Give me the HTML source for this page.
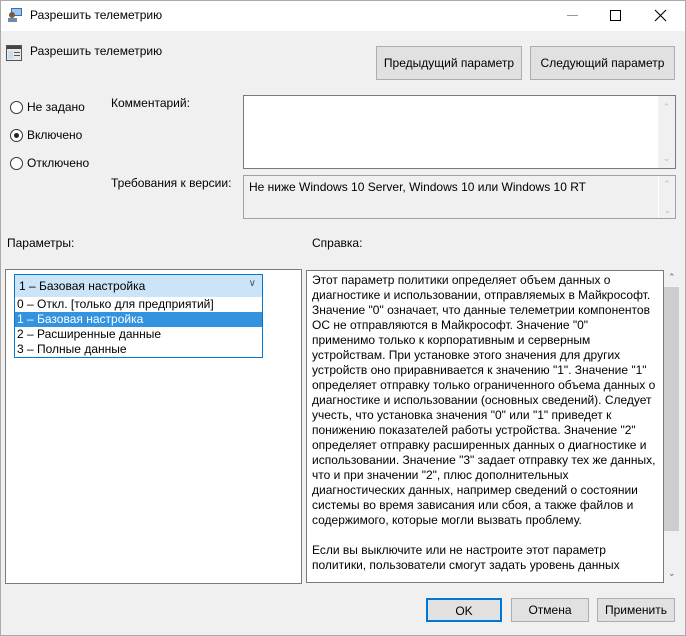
<!DOCTYPE html>
<html><head><meta charset="utf-8"><style>
*{margin:0;padding:0;box-sizing:border-box}
body{width:686px;height:636px;background:#f0f0f0;font-family:"Liberation Sans",sans-serif;font-size:12px;color:#000;position:relative;overflow:hidden}
.a{position:absolute;white-space:nowrap}
.btn{position:absolute;background:#e1e1e1;border:1px solid #adadad;text-align:center;font-size:12px}
.box{position:absolute;background:#fff;border:1px solid #7a7a7a}
.radio{position:absolute;width:13px;height:13px;border:1px solid #333;border-radius:50%;background:#fff}
.sb{position:absolute;background:#f0f0f0;color:#bbb;font-size:9px;text-align:center}
</style></head><body>
<div class="a" style="left:0;top:0;width:686px;height:636px;border:1px solid #aaa"></div>
<div class="a" style="left:1px;top:1px;width:684px;height:30px;background:#fff"></div>
<svg class="a" style="left:7px;top:7px" width="16" height="16"><rect x="4" y="1" width="11" height="8" fill="#3a6fb0"/><rect x="5" y="2" width="9" height="6" fill="#9cc4ee"/><circle cx="5" cy="8" r="3" fill="#7a5a3a"/><rect x="1" y="11" width="9" height="4" fill="#6a8ab0"/></svg>
<div class="a" style="left:30px;top:8px;font-size:12px">Разрешить телеметрию</div>
<div class="a" style="left:567px;top:15px;width:11px;height:1px;background:#999"></div>
<div class="a" style="left:610px;top:10px;width:11px;height:11px;border:1px solid #000"></div>
<svg class="a" style="left:654px;top:9px" width="13" height="13"><path d="M1 1L12 12M12 1L1 12" stroke="#000" stroke-width="1.1"/></svg>
<svg class="a" style="left:6px;top:45px" width="16" height="16"><rect x="0.5" y="0.5" width="15" height="15" fill="#e8e8e8" stroke="#555"/><rect x="1" y="1" width="14" height="3" fill="#444"/><rect x="2" y="6" width="5" height="8" fill="#cde"/><rect x="8" y="7" width="6" height="1" fill="#555"/><rect x="8" y="10" width="6" height="1" fill="#555"/></svg>
<div class="a" style="left:30px;top:44px">Разрешить телеметрию</div>
<div class="btn" style="left:376px;top:46px;width:146px;height:34px;line-height:32px">Предыдущий параметр</div>
<div class="btn" style="left:530px;top:46px;width:145px;height:34px;line-height:32px">Следующий параметр</div>
<div class="radio" style="left:10px;top:101px"></div><div class="a" style="left:27px;top:100px">Не задано</div>
<div class="radio" style="left:10px;top:129px"><div style="position:absolute;left:3px;top:3px;width:5px;height:5px;border-radius:50%;background:#222"></div></div><div class="a" style="left:27px;top:128px">Включено</div>
<div class="radio" style="left:10px;top:157px"></div><div class="a" style="left:27px;top:156px">Отключено</div>
<div class="a" style="left:111px;top:96px">Комментарий:</div>
<div class="a" style="left:111px;top:176px">Требования к версии:</div>
<div class="box" style="left:243px;top:95px;width:433px;height:74px"><div class="sb" style="right:0;top:0;width:17px;height:72px"><div style="margin-top:6px">⌃</div><div style="position:absolute;bottom:4px;width:17px">⌄</div></div></div>
<div class="box" style="left:243px;top:175px;width:433px;height:44px;background:#f0f0f0;border-color:#a0a0a0"><div class="a" style="left:5px;top:4px">Не ниже Windows 10 Server, Windows 10 или Windows 10 RT</div><div class="sb" style="right:0;top:0;width:17px;height:42px;border-left:1px solid #fff"><div style="margin-top:3px">⌃</div><div style="position:absolute;bottom:2px;width:17px">⌄</div></div></div>
<div class="a" style="left:7px;top:236px">Параметры:</div>
<div class="a" style="left:312px;top:236px">Справка:</div>
<div class="box" style="left:5px;top:269px;width:297px;height:315px"></div>
<div class="a" style="left:14px;top:274px;width:249px;height:24px;background:#cce4f7;border:1px solid #0078d7"><span class="a" style="left:4px;top:4px">1 – Базовая настройка</span><span class="a" style="right:6px;top:3px;color:#555;font-size:10px">∨</span></div>
<div class="a" style="left:14px;top:297px;width:249px;height:61px;background:#fff;border:1px solid #0078d7;border-top:none;line-height:15px">
<div style="padding-left:2px">0 – Откл. [только для предприятий]</div>
<div style="padding-left:2px;background:#3393df;color:#fff">1 – Базовая настройка</div>
<div style="padding-left:2px">2 – Расширенные данные</div>
<div style="padding-left:2px">3 – Полные данные</div></div>
<div class="box" style="left:306px;top:270px;width:358px;height:313px;overflow:hidden"><div style="position:absolute;left:5px;top:2px;line-height:15px;white-space:nowrap">Этот параметр политики определяет объем данных о<br>диагностике и использовании, отправляемых в Майкрософт.<br>Значение "0" означает, что данные телеметрии компонентов<br>ОС не отправляются в Майкрософт. Значение "0"<br>применимо только к корпоративным и серверным<br>устройствам. При установке этого значения для других<br>устройств оно приравнивается к значению "1". Значение "1"<br>определяет отправку только ограниченного объема данных о<br>диагностике и использовании (основных сведений). Следует<br>учесть, что установка значения "0" или "1" приведет к<br>понижению показателей работы устройства. Значение "2"<br>определяет отправку расширенных данных о диагностике и<br>использовании. Значение "3" задает отправку тех же данных,<br>что и при значении "2", плюс дополнительных<br>диагностических данных, например сведений о состоянии<br>системы во время зависания или сбоя, а также файлов и<br>содержимого, которые могли вызвать проблему.<br><br>Если вы выключите или не настроите этот параметр<br>политики, пользователи смогут задать уровень данных</div></div>
<div class="a" style="left:664px;top:270px;width:16px;height:313px;background:#f0f0f0"><div class="a" style="left:0;top:17px;width:15px;height:244px;background:#cdcdcd"></div><div class="a" style="left:4px;top:2px;color:#666;font-size:9px">⌃</div><div class="a" style="left:4px;top:298px;color:#666;font-size:9px">⌄</div></div>
<div class="btn" style="left:426px;top:598px;width:76px;height:24px;line-height:22px;border:2px solid #0078d7">OK</div>
<div class="btn" style="left:511px;top:598px;width:78px;height:24px;line-height:22px">Отмена</div>
<div class="btn" style="left:597px;top:598px;width:78px;height:24px;line-height:22px">Применить</div>
</body></html>
